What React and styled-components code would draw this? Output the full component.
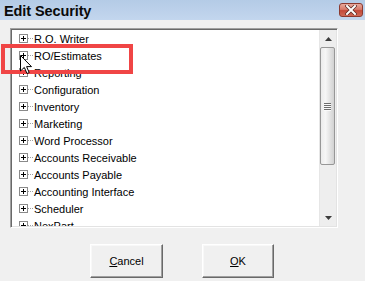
import React from "react";
import styled, { createGlobalStyle } from "styled-components";

const Global = createGlobalStyle`
  html, body { margin: 0; padding: 0; background: #f0f0f0; overflow: hidden; }
  * { box-sizing: border-box; }
`;

const Window = styled.div`
  position: relative;
  width: 365px;
  height: 281px;
  background: #f0f0f0;
  display: flex;
  flex-direction: column;
  font-family: "Liberation Sans", Arial, sans-serif;
`;

const TitleBar = styled.div`
  height: 20px;
  display: flex;
  align-items: center;
  justify-content: space-between;
  padding: 0 2px 0 4px;
  background: linear-gradient(to bottom, #b4cbe6, #c3d6ee);
`;

const Title = styled.div`
  font-weight: bold;
  font-size: 14.5px;
  color: #0a0a0a;
  letter-spacing: -0.1px;
  padding-top: 1px;
`;

const CloseButton = styled.div`
  width: 24px;
  height: 14px;
  margin-top: -1px;
  border: 1px solid #8c3a30;
  border-radius: 3px;
  background: linear-gradient(to bottom, #e8a99c 0%, #d87a6a 45%, #c44a3a 55%, #cf6a58 100%);
  display: flex;
  align-items: center;
  justify-content: center;
`;

const Body = styled.div`
  display: flex;
  flex-direction: column;
  padding: 8px 0 0 10px;
`;

const ListBox = styled.div`
  width: 328px;
  height: 200px;
  border: 1px solid;
  border-color: #a0a0a0 #ffffff #ffffff #a0a0a0;
  box-shadow: inset 1px 1px #696969, inset -1px -1px #e3e3e3;
  background: #ffffff;
  padding: 1px;
  display: flex;
  overflow: hidden;
`;

const Tree = styled.div`
  flex: 1;
  overflow: hidden;
  display: flex;
  flex-direction: column;
`;

const Row = styled.div`
  height: 17px;
  flex: none;
  display: flex;
  align-items: center;
  padding-left: 7px;
  font-size: 11px;
  color: #000;
  white-space: nowrap;
`;

const PlusBox = styled.span`
  position: relative;
  width: 9px;
  height: 9px;
  border: 1px solid #8a8a8a;
  background: #fff;
  flex: none;
  &::before, &::after {
    content: "";
    position: absolute;
    background: #000;
  }
  &::before { left: 1px; top: 3px; width: 5px; height: 1px; }
  &::after { left: 3px; top: 1px; width: 1px; height: 5px; }
`;

const Connector = styled.span`
  width: 5px;
  height: 0;
  border-top: 1px dotted #a0a0a0;
  flex: none;
`;

const Label = styled.span`
  margin-left: 1px;
`;

const Scrollbar = styled.div`
  width: 17px;
  flex: none;
  display: flex;
  flex-direction: column;
  background: #eeeeee;
  border-left: 1px solid #e6e6e6;
`;

const ArrowButton = styled.div`
  height: 17px;
  flex: none;
  display: flex;
  align-items: center;
  justify-content: center;
`;

const Track = styled.div`
  flex: 1;
  padding-top: 0;
  display: flex;
  flex-direction: column;
`;

const Thumb = styled.div`
  height: 118px;
  margin: 0 1px 0 0;
  border: 1px solid #979797;
  border-radius: 2px;
  background: linear-gradient(to right, #ececec 0%, #f6f6f6 35%, #e2e2e2 70%, #d2d2d2 100%);
  display: flex;
  align-items: center;
  justify-content: center;
`;

const Grip = styled.div`
  width: 7px;
  display: flex;
  flex-direction: column;
  gap: 1px;
  & > span { height: 1px; background: #6d6d6d; box-shadow: 0 1px #fafafa; }
`;

const ButtonRow = styled.div`
  display: flex;
  gap: 39px;
  margin: 16px 0 0 80px;
`;

const Button = styled.button`
  width: ${(p) => p.$w}px;
  height: 34px;
  padding: 0;
  font-family: "Liberation Sans", Arial, sans-serif;
  font-size: 11px;
  color: #000;
  background: #f0f0f0;
  border: 1px solid;
  border-color: #ffffff #696969 #696969 #ffffff;
  box-shadow: inset -1px -1px #a0a0a0, inset 1px 1px #f8f8f8;
  & u { text-decoration: underline; }
`;

const Highlight = styled.div`
  position: absolute;
  left: 1px;
  top: 44px;
  width: 132px;
  height: 30px;
  border: 4px solid #f04545;
  pointer-events: none;
`;

const Cursor = styled.svg`
  position: absolute;
  left: 20px;
  top: 55px;
`;

const items = [
  "R.O. Writer",
  "RO/Estimates",
  "Reporting",
  "Configuration",
  "Inventory",
  "Marketing",
  "Word Processor",
  "Accounts Receivable",
  "Accounts Payable",
  "Accounting Interface",
  "Scheduler",
  "NexPart",
];

export default function App() {
  return (
    <>
      <Global />
      <Window>
        <TitleBar>
          <Title>Edit Security</Title>
          <CloseButton>
            <svg width="12" height="10" viewBox="0 0 12 10">
              <path d="M2 1 L10 9 M10 1 L2 9" stroke="#5a2a24" strokeWidth="3.4" strokeLinecap="square" />
              <path d="M2 1 L10 9 M10 1 L2 9" stroke="#ffffff" strokeWidth="2" strokeLinecap="square" />
            </svg>
          </CloseButton>
        </TitleBar>
        <Body>
          <ListBox>
            <Tree>
              {items.map((t) => (
                <Row key={t}>
                  <PlusBox />
                  <Connector />
                  <Label>{t}</Label>
                </Row>
              ))}
            </Tree>
            <Scrollbar>
              <ArrowButton>
                <svg width="7" height="4" viewBox="0 0 7 4">
                  <path d="M3.5 0 L7 4 L0 4 Z" fill="#3c3c3c" />
                </svg>
              </ArrowButton>
              <Track>
                <Thumb>
                  <Grip>
                    <span />
                    <span />
                    <span />
                    <span />
                  </Grip>
                </Thumb>
              </Track>
              <ArrowButton>
                <svg width="7" height="4" viewBox="0 0 7 4">
                  <path d="M0 0 L7 0 L3.5 4 Z" fill="#3c3c3c" />
                </svg>
              </ArrowButton>
            </Scrollbar>
          </ListBox>
          <ButtonRow>
            <Button $w={73}>
              <u>C</u>ancel
            </Button>
            <Button $w={72}>
              <u>O</u>K
            </Button>
          </ButtonRow>
        </Body>
        <Highlight />
        <Cursor width="13" height="20" viewBox="0 0 13 20">
          <path
            d="M0.5 0.5 L0.5 16 L4.3 12.4 L7 18.5 L9.2 17.6 L6.6 11.6 L11.5 11.6 Z"
            fill="#ffffff"
            stroke="#000000"
            strokeWidth="1"
            strokeLinejoin="miter"
          />
        </Cursor>
      </Window>
    </>
  );
}
